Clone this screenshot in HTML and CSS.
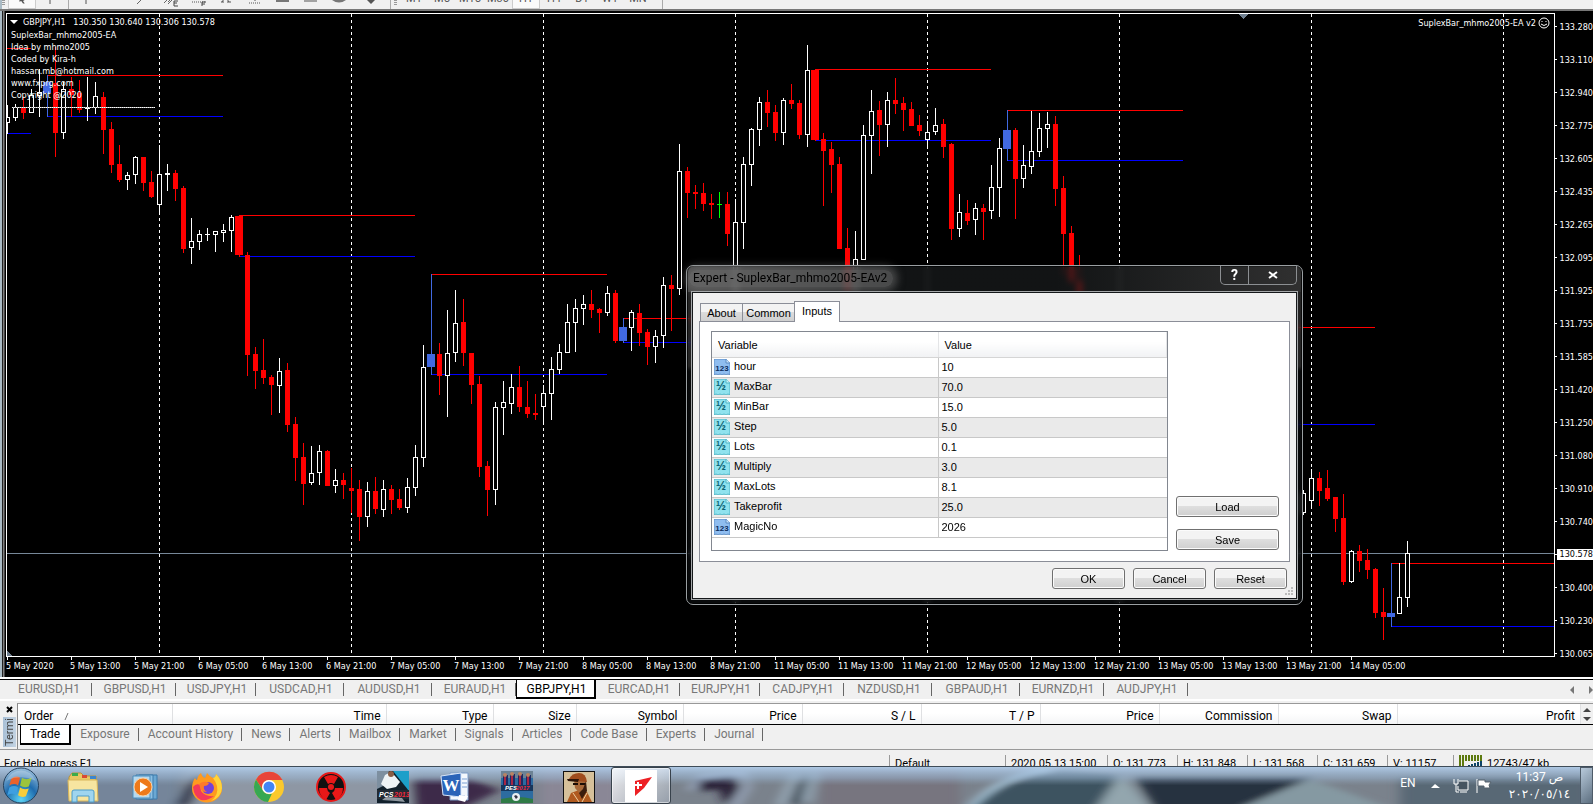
FILE: index.html
```html
<!DOCTYPE html>
<html lang="en">
<head>
  <meta charset="UTF-8" />
  <title>GBPJPY,H1</title>
  <meta name="viewport" content="width=device-width, initial-scale=1.0" />
  <link rel="stylesheet" href="styles.css">
</head>
<body>
  <svg class="defs" aria-hidden="true">
    <symbol id="icon-int" viewBox="0 0 16 16">
      <path d="M0 0h12l4 4v12l-2-1-2 1-2-1-2 1-2-1-2 1-2-1-2 1z" fill="#8fbdf0" stroke="#5d8cc4" />
      <path d="M12 0v4h4" fill="#c6e0fb" stroke="#5d8cc4" />
      <text x="8" y="12" text-anchor="middle" class="icon-text" fill="#0b2b5c">123</text>
    </symbol>
    <symbol id="icon-double" viewBox="0 0 16 16">
      <path d="M0 0h12l4 4v12l-2-1-2 1-2-1-2 1-2-1-2 1-2-1-2 1z" fill="#8fe2ee" stroke="#4fb4c6" />
      <path d="M12 0v4h4" fill="#c9f4fa" stroke="#4fb4c6" />
      <text x="7" y="11" text-anchor="middle" class="icon-half" fill="#0c6373">½</text>
    </symbol>
  </svg>

  <div class="app">
    <div class="toolbar">
      <span class="grip"></span>
      <button class="tool pressed" aria-label="Cursor"><svg viewBox="0 0 28 9"><path d="M10 0h6l-2 1 2 3h-2l-2-3-2 1z" fill="#555" /></svg></button>
      <button class="tool" aria-label="Crosshair"><svg viewBox="0 0 28 9"><path d="M14 0v4" stroke="#555" /></svg></button>
      <span class="separator"></span>
      <button class="tool" aria-label="Vertical line"><svg viewBox="0 0 28 9"><path d="M14 0v4" stroke="#555" /></svg></button>
      <button class="tool" aria-label="Horizontal line"></button>
      <button class="tool" aria-label="Trendline"><svg viewBox="0 0 28 9"><path d="M9 4l5-5" stroke="#666" /></svg></button>
      <button class="tool" aria-label="Channel"><svg viewBox="0 0 28 9"><path d="M8 3l3-3M12 4l4-4M14 0l-2 2" stroke="#666" /><path d="M22 1h-4v5h4M18 3h3" fill="none" stroke="#444" /></svg></button>
      <button class="tool" aria-label="Fibonacci"><svg viewBox="0 0 28 9"><path d="M8 2h13" stroke="#555" stroke-dasharray="1 1" /><path d="M18 6V2h4M18 4h3" fill="none" stroke="#444" /></svg></button>
      <button class="tool" aria-label="Text"><svg viewBox="0 0 28 9"><path d="M10 2l2-3M17 2l-2-3M9 2h3M15 2h4" stroke="#555" /></svg></button>
      <button class="tool" aria-label="Text label"><svg viewBox="0 0 28 9"><path d="M9 3h12M15 0v2" stroke="#555" stroke-dasharray="1 1" /></svg></button>
      <button class="tool" aria-label="Rectangle"><svg viewBox="0 0 28 9"><path d="M8 0h13v2H8z" fill="#777" /></svg></button>
      <button class="tool" aria-label="Line style"><svg viewBox="0 0 28 9"><path d="M8 1h13" stroke="#555" /></svg></button>
      <button class="tool" aria-label="Ellipse"><svg viewBox="0 0 28 9"><path d="M8 0h14q-7 5-14 0z" fill="#777" /></svg></button>
      <button class="tool" aria-label="Arrows"><svg viewBox="0 0 28 9"><path d="M15 0h8l-4 4z" fill="#555" /></svg></button>
      <span class="separator wide"></span>
      <span class="grip"></span>
      <button class="period">M1</button>
      <button class="period">M5</button>
      <button class="period">M15</button>
      <button class="period">M30</button>
      <button class="period pressed">H1</button>
      <button class="period">H4</button>
      <button class="period">D1</button>
      <button class="period">W1</button>
      <button class="period">MN</button>
      <span class="separator wide"></span>
    </div>

    <div class="chart-window">
      <div class="plot">
        <svg id="chart" shape-rendering="crispEdges"></svg>
        <div class="quote"><span class="arrow-down"></span>GBPJPY,H1&nbsp;&nbsp; 130.350 130.640 130.306 130.578</div>
        <div class="comment">
          SuplexBar_mhmo2005-EA<br>
          Idea by mhmo2005<br>
          Coded by Kira-h<br>
          hassan.mb@hotmail.com<br>
          www.fxprg.com<br>
          Copyright @2020
        </div>
        <div class="expert-name">SuplexBar_mhmo2005-EA v2
          <svg viewBox="0 0 12 12"><circle cx="6" cy="6" r="5" fill="none" stroke="#fff" /><path d="M4 4v1M8 4v1" stroke="#fff" /><path d="M3 7q3 3 6 0" fill="none" stroke="#fff" /></svg>
        </div>
      </div>
      <div class="price-axis">
        <span>133.280</span><span>133.110</span><span>132.940</span><span>132.775</span>
        <span>132.605</span><span>132.435</span><span>132.265</span><span>132.095</span>
        <span>131.925</span><span>131.755</span><span>131.585</span><span>131.420</span>
        <span>131.250</span><span>131.080</span><span>130.910</span><span>130.740</span>
        <span class="current"><b>130.578</b></span><span>130.400</span><span>130.230</span><span>130.065</span>
      </div>
      <div class="time-axis">
        <span>5 May 2020</span><span>5 May 13:00</span><span>5 May 21:00</span>
        <span>6 May 05:00</span><span>6 May 13:00</span><span>6 May 21:00</span>
        <span>7 May 05:00</span><span>7 May 13:00</span><span>7 May 21:00</span>
        <span>8 May 05:00</span><span>8 May 13:00</span><span>8 May 21:00</span>
        <span>11 May 05:00</span><span>11 May 13:00</span><span>11 May 21:00</span>
        <span>12 May 05:00</span><span>12 May 13:00</span><span>12 May 21:00</span>
        <span>13 May 05:00</span><span>13 May 13:00</span><span>13 May 21:00</span>
        <span>14 May 05:00</span>
      </div>
    </div>

    <nav class="chart-tabs">
      <button class="w88">EURUSD,H1</button>
      <button class="w84">GBPUSD,H1</button>
      <button class="w80">USDJPY,H1</button>
      <button class="w88">USDCAD,H1</button>
      <button class="w88">AUDUSD,H1</button>
      <button class="w84">EURAUD,H1</button>
      <button class="w80 active">GBPJPY,H1</button>
      <button class="w84">EURCAD,H1</button>
      <button class="w80">EURJPY,H1</button>
      <button class="w84">CADJPY,H1</button>
      <button class="w88">NZDUSD,H1</button>
      <button class="w88">GBPAUD,H1</button>
      <button class="w84">EURNZD,H1</button>
      <button class="w84">AUDJPY,H1</button>
      <div class="tab-scroll">
        <button aria-label="Scroll left"><svg viewBox="0 0 4 8"><path d="M4 0v8L0 4z" fill="#777" /></svg></button>
        <button aria-label="Scroll right"><svg viewBox="0 0 4 8"><path d="M0 0v8l4-4z" fill="#777" /></svg></button>
      </div>
    </nav>

    <div class="terminal">
      <div class="terminal-side">
        <button class="terminal-close" aria-label="Close"><svg viewBox="0 0 7 7"><path d="M1 1l5 5M6 1L1 6" stroke="#000" stroke-width="2" /></svg></button>
        <span class="terminal-name">Termi</span>
      </div>
      <div class="terminal-main">
        <div class="orders-row">
          <table class="orders">
            <tr>
              <th class="order">Order <svg viewBox="0 0 8 8"><path d="M1 8l3-7" stroke="#777" /></svg></th>
              <th class="time">Time</th>
              <th class="type">Type</th>
              <th class="size">Size</th>
              <th class="type">Symbol</th>
              <th class="money">Price</th>
              <th class="money">S / L</th>
              <th class="money">T / P</th>
              <th class="money">Price</th>
              <th class="money">Commission</th>
              <th class="money">Swap</th>
              <th>Profit</th>
            </tr>
          </table>
          <div class="spin"><svg viewBox="0 0 8 16"><path d="M0 6l4-4 4 4zM0 11h8l-4 4z" fill="#444" /></svg></div>
        </div>
        <nav class="terminal-tabs">
          <button class="active">Trade</button>
          <button>Exposure</button>
          <button>Account History</button>
          <button>News</button>
          <button>Alerts</button>
          <button>Mailbox</button>
          <button>Market</button>
          <button>Signals</button>
          <button>Articles</button>
          <button>Code Base</button>
          <button>Experts</button>
          <button>Journal</button>
        </nav>
      </div>
    </div>

    <div class="statusbar">
      <span class="help">For Help, press F1</span>
      <span class="profile">Default</span>
      <span class="date">2020.05.13 15:00</span>
      <span class="ohlc">O: 131.773</span>
      <span class="ohlc">H: 131.848</span>
      <span class="ohlc">L: 131.568</span>
      <span class="ohlc">C: 131.659</span>
      <span class="volume">V: 11157</span>
      <span class="traffic">
        <svg viewBox="0 0 24 12"><path d="M0 3h24" stroke="#5d7a10" stroke-width="6" stroke-dasharray="2 1" /><path d="M1 6v6M4 6v6" stroke="#5d7a10" stroke-width="2" /><path d="M7 11v1M10 10v2M13 9v3M16 8v4M19 7v5M22 6v6" stroke="#0d4468" stroke-width="2" /></svg>
        12743/47 kb
      </span>
    </div>

    <div class="taskbar">
      <svg class="wallpaper" viewBox="0 0 1593 38" preserveAspectRatio="none" aria-hidden="true">
        <defs>
          <filter id="soft"><feGaussianBlur stdDeviation="6 3" /></filter>
          <linearGradient id="glass" x1="0" y1="0" x2="0" y2="1">
            <stop offset="0" stop-color="#b4d0ee" stop-opacity="0.9" />
            <stop offset="0.3" stop-color="#9db9d6" stop-opacity="0.5" />
            <stop offset="0.5" stop-color="#8fa5ba" stop-opacity="0" />
          </linearGradient>
        </defs>
        <rect width="1593" height="38" fill="#7a828c" />
        <g filter="url(#soft)">
          <rect x="-10" y="0" width="190" height="50" fill="#74859a" />
          <rect x="185" y="-5" width="225" height="50" fill="#8e97a4" />
          <path d="M175 40l20-32 10 0-15 32z" fill="#2f3346" />
          <path d="M410 12h60l30 12-40 20h-45z" fill="#3e2c48" />
          <rect x="540" y="0" width="80" height="50" fill="#8a8796" />
          <path d="M690 24l10-14 44-4 4 14-14 22" fill="none" stroke="#a3b2cc" stroke-width="5" />
          <path d="M698 12l36-4 4 14-12 18-8-18-18 4z" fill="#2c2438" />
          <path d="M780 40l16-34M806 36l8-30" stroke="#a3b8c8" stroke-width="6" />
          <path d="M790 38l8-20 8-10 4 0-10 30z" fill="#36424e" />
          <rect x="820" y="0" width="140" height="50" fill="#77757f" />
          <path d="M970 44q30-30 90-42l60 6 0 40z" fill="#3d5360" />
          <path d="M970 42q30-34 80-40" fill="none" stroke="#a9cbe0" stroke-width="5" />
          <path d="M1095 44l26-38 30 38z" fill="#93a6ae" />
          <path d="M1135 10h180l-80 34h-80z" fill="#26323f" />
          <path d="M1310 12l-70 30h150z" fill="#8599a2" />
          <rect x="1400" y="10" width="190" height="40" fill="#586875" />
        </g>
        <rect width="1593" height="38" fill="url(#glass)" />
      </svg>

      <button class="start" aria-label="Start">
        <svg viewBox="0 0 38 38">
          <defs>
            <radialGradient id="orb" cx="0.5" cy="0.9" r="0.9">
              <stop offset="0" stop-color="#5cd3f5" />
              <stop offset="0.5" stop-color="#1f6cae" />
              <stop offset="1" stop-color="#9cc0dc" />
            </radialGradient>
          </defs>
          <circle cx="19" cy="19" r="18" fill="url(#orb)" stroke="#23405c" />
          <path d="M9 12q5-4 9-1l-2 8q-4-3-9 0z" fill="#e9622c" />
          <path d="M20 11q4 3 10 0l-3 9q-5 2-9-1z" fill="#9cc43c" />
          <path d="M7 21q5-3 9 0l-2 8q-4-3-9 0z" fill="#3f9fe0" />
          <path d="M18 21q4 3 9 1l-3 8q-4 2-8-1z" fill="#f8cd3a" />
          <path d="M4 14a16 16 0 0 1 30 0q-15-7-30 0z" fill="#fff" opacity="0.25" />
        </svg>
      </button>
      <button class="app-button" aria-label="Explorer">
        <svg viewBox="0 0 32 32">
          <path d="M2 6l3-4h9l3 3h12v20H2z" fill="#e8c763" stroke="#b8923b" />
          <path d="M5 2h6v3H5z" fill="#3cab4a" /><path d="M15 4h5v3h-5z" fill="#d94a33" /><path d="M23 5h6v3h-6z" fill="#3a85d0" />
          <path d="M1 9h29l1 21H2z" fill="#f7e5a0" stroke="#d9b65b" />
          <path d="M5 31V21q0-2 2-2h18q2 0 2 2v10h-5v-6H10v6z" fill="#9fd5ef" stroke="#4c9cc9" />
        </svg>
      </button>
      <button class="app-button" aria-label="Media Player">
        <svg viewBox="0 0 32 32">
          <path d="M10 4h18v24H10z" fill="#6ba8d3" stroke="#3c7bab" />
          <path d="M7 4h17v24H7z" fill="#8cc0e4" stroke="#3c7bab" />
          <path d="M4 5h17v22H4z" fill="#b5d9f0" stroke="#4d8dbb" />
          <circle cx="14" cy="16" r="9" fill="#ee7a1b" stroke="#fbd2a4" />
          <path d="M11 11l8 5-8 5z" fill="#fff" />
        </svg>
      </button>
      <button class="app-button" aria-label="Firefox">
        <svg viewBox="0 0 32 32">
          <path d="M16 2q2 3 6 5 3-1 3-4 6 6 6 14a15 14 0 0 1-30 1Q1 11 4 7q1 2 2 2 1-5 4-7 1 4 4 5 1-2 2-5z" fill="#ff9a1f" />
          <path d="M25 3q6 6 6 14a15 14 0 0 1-11 13q8-6 6-15-1-4-4-8 3-1 3-4z" fill="#ffd43a" />
          <path d="M2 16q3-4 7-2l1 6q4 6 13 5-6 5-13 4-7-3-8-13z" fill="#f4395a" />
          <circle cx="17" cy="17" r="6" fill="#7542d8" />
          <path d="M8 13q5-4 10-1-1 3-5 3-1 4 3 6-6 1-8-8z" fill="#ff7a2a" />
        </svg>
      </button>
      <button class="app-button" aria-label="Chrome">
        <svg viewBox="0 0 32 32">
          <circle cx="16" cy="16" r="15" fill="#fbc92d" />
          <path d="M3 8.500A15 15 0 0 1 29.500 9H16a7 7 0 0 0-6 10.500z" fill="#e8453a" />
          <path d="M3 8.500l7 11A7 7 0 0 0 19 22.500L15 31A15 15 0 0 1 3 8.500z" fill="#36a852" />
          <circle cx="16" cy="16" r="7" fill="#fff" /><circle cx="16" cy="16" r="5.500" fill="#4285f4" />
        </svg>
      </button>
      <button class="app-button" aria-label="Radiation">
        <svg viewBox="0 0 32 32">
          <circle cx="16" cy="16" r="14" fill="#111" stroke="#e81818" stroke-width="2" />
          <path d="M13 13L9 6q7-4 14 0l-4 7q-3-2-6 0z" fill="#e81818" />
          <path d="M12 17H4q0 8 7 12l4-7q-3-2-3-5z" fill="#e81818" />
          <path d="M20 17h8q0 8-7 12l-4-7q3-2 3-5z" fill="#e81818" />
          <circle cx="16" cy="16" r="3" fill="#e81818" />
        </svg>
      </button>
      <button class="app-button" aria-label="PES 2013">
        <svg viewBox="0 0 32 32">
          <path d="M0 0h32v32H0z" fill="#11202c" />
          <path d="M16 0h16v20z" fill="#1d9fc9" /><path d="M0 0h12l-4 14-8 4z" fill="#7d8fa0" />
          <path d="M8 4l6-3 4 4 5 6-4 5-9 2-6-5z" fill="#eef3f6" />
          <circle cx="14" cy="3" r="3" fill="#8a5d45" />
          <path d="M0 19h32v9H0z" fill="#222a33" />
          <path d="M5 29l4-3 16 1 3 4-9-1z" fill="#e3e8ec" opacity="0.6" />
          <text x="2" y="26" class="game-text" fill="#fff">PCS</text><text x="17" y="26" class="game-text" fill="#f0283c">2013</text>
        </svg>
      </button>
      <button class="app-button" aria-label="Word">
        <svg viewBox="0 0 32 32">
          <path d="M11 2h18v27H11z" fill="#f4f8fd" stroke="#7d9cc8" />
          <path d="M23 8h5M23 12h5M23 16h5M14 25h12" stroke="#7aa0d4" />
          <path d="M2 5l20-3v24L4 24z" fill="#2a63b8" stroke="#d7e5f8" />
          <text x="12" y="20" text-anchor="middle" class="word-text" fill="#fff">W</text>
          <path d="M20 24l9 1-3 6-7-2z" fill="#fff" />
        </svg>
      </button>
      <button class="app-button" aria-label="PES 2017">
        <svg viewBox="0 0 32 32">
          <path d="M0 0h32v32H0z" fill="#2d6ca0" />
          <path d="M0 0h32v7H0z" fill="#6c8294" />
          <path d="M2 4h5v12H2zM9 3h5v13H9zM17 3h5v13h-5zM25 4h5v12h-5z" fill="#1f2a63" />
          <path d="M4 6v9M11 5v10M19 5v10M27 6v9" stroke="#a72743" stroke-width="2" />
          <circle cx="4" cy="4" r="2" fill="#b98262" /><circle cx="11" cy="3" r="2" fill="#b98262" /><circle cx="19" cy="3" r="2" fill="#b98262" /><circle cx="27" cy="4" r="2" fill="#b98262" />
          <path d="M0 14h32v6H0z" fill="#16365c" />
          <text x="4" y="19" class="game-text small" fill="#fff">PES</text><text x="15" y="19" class="game-text small" fill="#f0283c">2017</text>
          <path d="M0 28q16-4 32 0v4H0z" fill="#2f7b46" />
          <circle cx="15" cy="26" r="4" fill="#e8eef2" /><path d="M13 25l2-1 2 2-2 2z" fill="#334" />
        </svg>
      </button>
      <button class="app-button" aria-label="San Andreas">
        <svg viewBox="0 0 32 32">
          <path d="M0 0h32v32H0z" fill="#111" /><path d="M1 1h30v30H1z" fill="#d6c09a" />
          <path d="M4 31l4-9 8-3 8 2 5 10z" fill="#b05a20" />
          <path d="M11 9h12l-1 9-5 5-5-6z" fill="#a8693a" />
          <path d="M6 8q3-6 10-6 7 0 8 9l-9-1z" fill="#a04c1e" /><path d="M4 8l12 0-1 3-10-1z" fill="#2c1409" />
          <path d="M10 12h5v2h-5zM17 12h6v2h-6z" fill="#1b0d06" />
          <path d="M16 22l4-4 3-8 1 10-5 8z" fill="#3b1c0d" /><path d="M10 22l6 9M24 22l-5 9" stroke="#f0cfa0" />
        </svg>
      </button>
      <button class="app-button running" aria-label="MetaTrader">
        <svg viewBox="0 0 32 32">
          <path d="M0 0h32v32H0z" fill="#fff" />
          <path d="M10 11l17-4-8 11-9 8z" fill="#ed2024" />
          <path d="M13 12v7M10 15h7" stroke="#fff" stroke-width="2" />
        </svg>
      </button>

      <div class="tray">
        <button class="lang">EN</button>
        <button aria-label="Show hidden icons"><svg class="tray-arrow" viewBox="0 0 9 6"><path d="M0 5l4-4 5 4z" fill="#fff" /></svg></button>
        <button aria-label="Network"><svg class="tray-icon" viewBox="0 0 16 16"><path d="M6 3h9v9H5V8" fill="#465460" stroke="#fff" /><path d="M1 1v5h4V1M3 6v8h3M7 14h7" fill="none" stroke="#fff" /></svg></button>
        <button aria-label="Action center"><svg class="tray-icon" viewBox="0 0 16 16"><path d="M1 1v14" stroke="#fff" /><path d="M2 2h7v2h6l-2 3 1 3H8V8H2z" fill="#fff" stroke="#54616c" /></svg></button>
        <div class="clock"><span>11:37 ص</span><span>٢٠٢٠/٠٥/١٤</span></div>
        <button class="show-desktop" aria-label="Show desktop"></button>
      </div>
    </div>
  </div>

  <section class="dialog" role="dialog" aria-labelledby="dialog-title">
    <header class="titlebar">
      <span id="dialog-title" class="dialog-title">Expert - SuplexBar_mhmo2005-EAv2</span>
      <div class="window-buttons">
        <button class="help-button">?</button>
        <button class="close-button" aria-label="Close"><svg viewBox="0 0 10 8"><path d="M1 1l8 6M9 1L1 7" stroke="#fff" stroke-width="2" /></svg></button>
      </div>
    </header>
    <div class="dialog-body">
      <div class="dialog-tabs">
        <button>About</button>
        <button class="wide">Common</button>
        <button class="active">Inputs</button>
      </div>
      <div class="panel">
        <div class="inputs-box">
          <table class="inputs">
            <thead>
              <tr><th class="name">Variable</th><th>Value</th></tr>
            </thead>
            <tbody>
              <tr><td><svg><use href="#icon-int" /></svg>hour</td><td>10</td></tr>
              <tr><td><svg><use href="#icon-double" /></svg>MaxBar</td><td>70.0</td></tr>
              <tr><td><svg><use href="#icon-double" /></svg>MinBar</td><td>15.0</td></tr>
              <tr><td><svg><use href="#icon-double" /></svg>Step</td><td>5.0</td></tr>
              <tr><td><svg><use href="#icon-double" /></svg>Lots</td><td>0.1</td></tr>
              <tr><td><svg><use href="#icon-double" /></svg>Multiply</td><td>3.0</td></tr>
              <tr><td><svg><use href="#icon-double" /></svg>MaxLots</td><td>8.1</td></tr>
              <tr><td><svg><use href="#icon-double" /></svg>Takeprofit</td><td>25.0</td></tr>
              <tr><td><svg><use href="#icon-int" /></svg>MagicNo</td><td>2026</td></tr>
            </tbody>
          </table>
        </div>
        <div class="side-buttons">
          <button class="push">Load</button>
          <button class="push">Save</button>
        </div>
      </div>
      <div class="dialog-footer">
        <button class="push">OK</button>
        <button class="push">Cancel</button>
        <button class="push">Reset</button>
      </div>
      <svg class="resize-grip" viewBox="0 0 8 8"><path d="M6 0h2v2H6zM3 3h2v2H3zM6 3h2v2H6zM0 6h2v2H0zM3 6h2v2H3zM6 6h2v2H6z" fill="#bbb" /></svg>
    </div>
  </section>

  <script>
    const STEP = 8;
    const TOP = 14;
    const chart = document.getElementById("chart");

    // [bar, high, body top, body bottom, low, kind]
    // kinds: w = up, r = down, g = flat, b / R = marked bars
    const bars = [
      [0,105,117,123,134,"w"],[1,104,107,118,121,"w"],[2,97,107,113,119,"r"],[3,89,95,113,113,"w"],
      [4,69,92,96,117,"w"],[5,75,82,93,117,"b"],[6,47,83,133,157,"r"],[7,82,89,133,139,"w"],
      [8,77,89,95,117,"r"],[9,80,93,110,113,"r"],[10,77,107,109,121,"w"],[11,82,96,108,114,"w"],
      [12,92,97,130,154,"r"],[13,122,129,165,173,"r"],[14,145,164,180,182,"r"],[15,172,175,180,190,"w"],
      [16,156,157,175,184,"w"],[17,157,157,183,191,"r"],[18,171,182,197,198,"r"],[19,145,174,205,214,"w"],
      [20,164,173,175,191,"w"],[21,170,173,189,201,"r"],[22,186,188,249,253,"r"],[23,218,241,248,264,"w"],
      [24,230,234,242,250,"w"],[25,228,234,235,241,"w"],[26,231,231,235,252,"w"],[27,224,230,233,242,"w"],
      [28,215,217,231,252,"w"],[29,215,216,255,257,"R"],[30,252,255,355,376,"r"],[31,347,354,371,389,"r"],
      [32,339,370,378,384,"r"],[33,375,377,385,415,"r"],[34,358,371,386,413,"w"],[35,363,370,425,432,"r"],
      [36,417,424,458,481,"r"],[37,443,457,484,505,"r"],[38,446,473,483,485,"w"],[39,445,451,473,485,"w"],
      [40,450,451,486,486,"r"],[41,469,480,486,493,"w"],[42,473,480,485,499,"r"],[43,468,488,491,513,"r"],
      [44,480,489,517,541,"r"],[45,482,491,517,527,"w"],[46,477,491,509,514,"r"],[47,480,489,510,517,"w"],
      [48,485,489,500,514,"r"],[49,489,499,508,510,"r"],[50,478,487,508,513,"w"],[51,445,457,488,496,"w"],
      [52,345,367,458,467,"w"],[53,274,354,367,375,"b"],[54,343,354,376,395,"r"],[55,310,353,376,417,"w"],
      [56,290,323,353,362,"w"],[57,299,322,353,366,"r"],[58,353,353,385,404,"r"],[59,376,384,467,477,"r"],
      [60,461,466,490,516,"r"],[61,402,407,490,505,"w"],[62,381,402,408,435,"w"],[63,374,387,404,414,"w"],
      [64,366,387,407,412,"r"],[65,381,407,414,418,"r"],[66,394,413,415,420,"r"],[67,385,393,407,423,"w"],
      [68,357,369,394,420,"w"],[69,344,352,370,374,"w"],[70,304,322,353,353,"w"],[71,299,308,323,352,"w"],
      [72,295,304,309,325,"w"],[73,290,304,310,318,"r"],[74,308,309,313,333,"r"],[75,286,293,313,316,"w"],
      [76,290,293,341,343,"r"],[77,318,327,341,343,"b"],[78,310,312,328,351,"w"],[79,304,313,333,346,"r"],
      [80,329,332,347,365,"r"],[81,330,336,347,363,"w"],[82,277,285,336,348,"w"],[83,275,285,289,331,"r"],
      [84,144,171,289,295,"w"],[85,167,171,193,218,"r"],[86,185,192,194,209,"r"],[87,183,193,204,211,"r"],
      [88,194,203,205,219,"r"],[89,192,204,205,218,"g"],[90,192,204,234,246,"r"],[91,199,222,290,300,"w"],
      [92,157,164,223,249,"w"],[93,128,129,165,186,"w"],[94,97,102,130,146,"w"],[95,90,102,113,127,"r"],
      [96,105,112,133,141,"r"],[97,98,100,133,145,"w"],[98,84,100,104,109,"r"],[99,100,103,135,139,"r"],
      [100,45,70,135,147,"w"],[101,70,70,140,141,"R"],[102,133,139,151,206,"r"],[103,142,149,165,193,"r"],
      [104,157,164,249,249,"r"],[105,228,248,290,298,"r"],[106,231,259,290,298,"w"],[107,125,135,260,260,"w"],
      [108,90,111,136,174,"w"],[109,101,110,125,156,"r"],[110,92,100,125,147,"w"],[111,78,100,104,114,"r"],
      [112,97,103,110,131,"r"],[113,102,109,126,126,"r"],[114,115,125,131,136,"r"],[115,121,132,140,148,"w"],
      [116,108,125,132,135,"w"],[117,119,124,147,158,"r"],[118,143,144,229,240,"r"],[119,194,212,229,237,"w"],
      [120,200,213,221,225,"r"],[121,203,208,220,235,"w"],[122,204,208,212,240,"r"],[123,165,187,211,219,"w"],
      [124,138,148,188,217,"w"],[125,110,130,149,161,"b"],[126,128,130,179,219,"r"],[127,145,165,179,188,"w"],
      [128,111,151,167,174,"w"],[129,113,128,152,157,"w"],[130,112,124,129,148,"w"],[131,116,124,189,206,"r"],
      [132,176,188,234,275,"r"],[133,226,233,281,284,"r"],[134,255,281,300,304,"r"],
      [162,490,493,513,515,"w"],[163,469,478,501,507,"w"],[164,472,478,491,506,"r"],[165,470,488,499,501,"r"],
      [166,497,497,519,532,"r"],[167,494,518,582,585,"r"],[168,550,551,582,583,"w"],[169,545,551,561,572,"r"],
      [170,549,560,570,579,"r"],[171,568,569,613,618,"r"],[172,588,612,617,640,"r"],[173,563,613,617,627,"b"],
      [174,563,597,614,614,"w"],[175,541,553,598,607,"w"]
    ];

    // [first bar, last bar, upper line, lower line]
    const levels = [
      [0,3,48,133],[5,27,75,116],[29,51,215,256],[53,75,274,374],[77,99,318,342],
      [101,123,69,140],[125,147,110,160],[149,171,327,424],[173,400,563,626]
    ];

    const colors = { w: "#ffffff", r: "#ff0000", g: "#00ff00", b: "#4169e1", R: "#ff0000" };

    function rect(x, y, width, height, fill) {
      const el = document.createElementNS("http://www.w3.org/2000/svg", "rect");
      const attrs = { x, y: y - TOP, width, height, fill };
      for (const name in attrs) el.setAttribute(name, attrs[name]);
      chart.appendChild(el);
    }

    function drawGrid() {
      for (let bar = 19; bar < 400; bar += 24) {
        for (let y = 14; y < 656; y += 6) {
          rect(bar * STEP, y, 1, 3, "#ffffff");
        }
      }
      rect(0, 553, 4000, 1, "#778899");
    }

    function drawLevels() {
      levels.forEach(([from, to, upper, lower]) => {
        rect(from * STEP, upper, (to - from) * STEP, 1, "#ff0000");
        rect(from * STEP, lower, (to - from) * STEP, 1, "#0000ff");
      });
    }

    function drawBars() {
      bars.forEach(([bar, high, top, bottom, low, kind]) => {
        const x = bar * STEP;
        const height = Math.max(bottom - top, 1);
        rect(x, high, 1, low - high, colors[kind]);
        if (kind === "b" || kind === "R") {
          rect(x - 4, top, 8, height, colors[kind]);
        } else {
          rect(x - 2, top, 5, height, colors[kind]);
          if (kind === "w" && height > 2) rect(x - 1, top + 1, 3, height - 2, "#000000");
        }
      });
    }

    function drawMarkers() {
      // comment underline, shift marker and scroll corner
      rect(5, 107, 143, 1, "#aaaaaa");
      for (let x = 5; x < 148; x += 2) rect(x, 107, 1, 1, "#ffffff");
      for (let i = 0; i < 5; i++) rect(1232 + i, 14 + i, 9 - i * 2, 1, "#708090");
      for (let i = 0; i < 5; i++) rect(0, 651 + i, i + 1, 1, "#708090");
    }

    drawGrid();
    drawLevels();
    drawBars();
    drawMarkers();
  </script>
</body>
</html>
```
FILE: styles.css
```css
* {
  box-sizing: border-box;
}

body {
  margin: 0;
  background: #000;
  overflow: hidden;
  font-family: Roboto, "Noto Sans", sans-serif;
  font-size: 12px;
}

button {
  font: inherit;
  color: inherit;
  background: none;
  border: 0;
  padding: 0;
  margin: 0;
}

.defs {
  position: absolute;
  width: 0;
  height: 0;
}

.icon-text {
  font: bold 8px "Liberation Sans", sans-serif;
}

.icon-half {
  font: bold 12px "Liberation Sans", sans-serif;
}

.game-text {
  font: italic bold 7px "Liberation Sans", sans-serif;
}

.game-text.small {
  font-size: 6px;
}

.word-text {
  font: bold 17px "Liberation Serif", serif;
}

.app {
  display: flex;
  flex-direction: column;
  height: 100vh;
}

/* toolbar */

.toolbar {
  display: flex;
  align-items: flex-end;
  height: 9px;
  overflow: hidden;
  background: #f0f0f0;
  border-left: 2px solid #a9bac4;
  flex: none;
}

.grip {
  width: 6px;
  height: 6px;
  align-self: flex-start;
  border-right: 3px solid transparent;
  background: repeating-linear-gradient(#999 0 1px, #f0f0f0 1px 2px) content-box;
}

.tool {
  width: 28px;
  height: 9px;
  flex: none;
}

.tool svg {
  display: block;
  width: 28px;
  height: 9px;
}

.tool.pressed {
  border: 1px solid #ccc;
  border-top: 0;
  background: #fafafa;
}

.tool.pressed svg {
  height: 8px;
}

.separator {
  width: 8px;
  height: 9px;
  border-left: 1px solid #aaa;
  margin: 0 0 0 4px;
  flex: none;
}

.separator + .tool {
  margin-left: -4px;
}

.separator.wide {
  width: 4px;
  margin-left: 10px;
}

.period {
  width: 28px;
  height: 26px;
  padding-top: 6px;
  font-size: 11px;
  line-height: 12px;
  color: #555;
  flex: none;
}

.period.pressed {
  background: #fafafa;
  border: 1px solid #ccc;
}

/* chart */

.chart-window {
  flex: 1;
  min-height: 0;
  display: grid;
  grid-template-columns: 1fr 38px;
  grid-template-rows: 1fr 20px;
  padding: 2px 0 0 6px;
  border-top: 2px solid #777;
  border-bottom: 2px solid #fff;
  background: linear-gradient(to right, #a9bac4 0 2px, #222 2px 3px, #808080 3px 4px, #444 4px 5px, #000 5px);
  color: #fff;
  font-family: "DejaVu Sans Condensed", "DejaVu Sans", sans-serif;
  font-size: 9px;
  overflow: hidden;
}

.plot {
  position: relative;
  border: 1px solid #fff;
  overflow: hidden;
}

.plot > svg {
  display: block;
  width: 100%;
  height: 100%;
}

.quote {
  position: absolute;
  left: 3px;
  top: 2px;
  line-height: 12px;
}

.arrow-down {
  display: inline-block;
  border: 4px solid transparent;
  border-top: 4px solid #fff;
  border-bottom: 0;
  margin: 0 5px 1px 0;
}

.comment {
  position: absolute;
  left: 4px;
  top: 15px;
  line-height: 12px;
}

.expert-name {
  position: absolute;
  right: 4px;
  top: 3px;
  display: flex;
  gap: 2px;
  line-height: 12px;
}

.expert-name svg {
  width: 12px;
  height: 12px;
}

.price-axis {
  grid-row: 1 / 3;
  grid-column: 2;
  margin-top: -3px;
  min-height: 0;
}

.price-axis span {
  display: flex;
  align-items: center;
  gap: 3px;
  height: 33px;
}

.price-axis span::before {
  content: "";
  width: 2px;
  height: 1px;
  background: #fff;
}

.price-axis b {
  font-weight: normal;
}

.price-axis .current {
  gap: 0;
}

.current b {
  flex: 1;
  padding-left: 3px;
  line-height: 11px;
  background: #fff;
  color: #000;
}

.time-axis {
  display: flex;
  white-space: nowrap;
  overflow: hidden;
}

.time-axis span {
  position: relative;
  flex: 0 0 64px;
  padding-top: 3px;
  line-height: 12px;
}

.time-axis span::before {
  content: "";
  position: absolute;
  left: 1px;
  top: 0;
  width: 1px;
  height: 3px;
  background: #fff;
}

/* chart tabs */

.chart-tabs {
  display: flex;
  height: 24px;
  padding: 0 0 4px 4px;
  border-top: 1px solid #000;
  background: linear-gradient(#f0f0f0 19px, #fff 19px 21px, #f0f0f0 21px);
  color: #777;
  flex: none;
}

.chart-tabs > button {
  position: relative;
  height: 19px;
  padding: 0 0 2px 2px;
  line-height: 16px;
}

.chart-tabs > button::after,
.terminal-tabs button::after {
  content: "";
  position: absolute;
  right: 0;
  top: 3px;
  width: 1px;
  height: 13px;
  background: #666;
}

.w80 {
  width: 80px;
}

.w84 {
  width: 84px;
}

.w88 {
  width: 88px;
}

.chart-tabs .active {
  padding-bottom: 0;
  background: #fff;
  color: #000;
  border: 1px solid #000;
  border-width: 0 2px 2px 1px;
}

.chart-tabs .active::after,
.terminal-tabs .active::after {
  display: none;
}

.tab-scroll {
  margin-left: auto;
  display: flex;
  align-items: center;
  gap: 15px;
}

.tab-scroll svg {
  display: block;
  width: 4px;
  height: 8px;
}

/* terminal */

.terminal {
  display: flex;
  height: 46px;
  background: #f0f0f0;
  flex: none;
}

.terminal-side {
  width: 17px;
  padding: 2px 0 0 3px;
  flex: none;
}

.terminal-close {
  display: block;
  width: 12px;
  height: 8px;
}

.terminal-close svg {
  display: block;
  width: 7px;
  height: 7px;
  margin-left: 3px;
}

.terminal-name {
  display: block;
  width: 13px;
  height: 30px;
  margin-top: 4px;
  writing-mode: vertical-rl;
  transform: rotate(180deg);
  font-size: 11px;
  line-height: 13px;
  text-align: center;
  color: #444;
  background: linear-gradient(to right, #c3d3e2, #a9c0d6);
}

.terminal-main {
  flex: 1;
  min-width: 0;
  border-left: 1px solid #888;
  border-top: 1px solid #999;
}

.orders-row {
  display: flex;
  height: 21px;
  border-bottom: 1px solid #000;
  background: linear-gradient(#fff 9px, #f4f5f6);
}

.orders {
  flex: 1;
  table-layout: fixed;
  border-collapse: collapse;
}

.orders th {
  padding: 3px 5px 0 0;
  border-right: 1px solid #dfe0e2;
  font-weight: normal;
  line-height: 16px;
  text-align: right;
  white-space: nowrap;
}

.orders .order {
  width: 154px;
  padding-left: 6px;
  text-align: left;
}

.order svg {
  width: 8px;
  height: 8px;
  margin-left: 8px;
}

.orders .time {
  width: 214px;
}

.orders .type {
  width: 107px;
}

.orders .size {
  width: 83px;
}

.orders .money {
  width: 119px;
}

.spin {
  width: 12px;
  padding: 2px;
  background: #f0f0f0;
}

.spin svg {
  display: block;
  width: 8px;
  height: 16px;
}

.terminal-tabs {
  display: flex;
  padding-left: 2px;
  color: #777;
}

.terminal-tabs button {
  position: relative;
  height: 20px;
  padding: 0 9px 2px;
  line-height: 17px;
  white-space: nowrap;
}

.terminal-tabs .active {
  background: #fff;
  color: #000;
  border: 1px solid #000;
  border-width: 0 2px 2px 1px;
  padding: 0 9px;
}

/* status bar */

.statusbar {
  display: flex;
  height: 17px;
  padding: 5px 0 0 2px;
  border-top: 1px solid #999;
  background: #f0f0f0;
  font-size: 11px;
  line-height: 18px;
  white-space: nowrap;
  overflow: hidden;
  flex: none;
}

.statusbar span {
  flex: none;
  height: 18px;
  padding-left: 5px;
  border-left: 1px solid #999;
}

.statusbar .help {
  flex: 1;
  padding-left: 2px;
  border: 0;
}

.statusbar .profile {
  width: 116px;
}

.statusbar .date {
  width: 102px;
}

.statusbar .ohlc {
  width: 70px;
}

.statusbar .volume {
  width: 66px;
}

.statusbar .traffic {
  width: 140px;
  display: flex;
  gap: 4px;
}

.traffic svg {
  width: 24px;
  height: 12px;
}

/* taskbar */

.taskbar {
  position: relative;
  display: flex;
  height: 38px;
  border-top: 1px solid #3f4c58;
  overflow: hidden;
  flex: none;
}

.wallpaper {
  position: absolute;
  inset: 0;
  width: 100%;
  height: 100%;
}

.start,
.app-button,
.tray {
  position: relative;
}

.start {
  width: 52px;
  padding-left: 2px;
}

.start svg {
  display: block;
  width: 38px;
  height: 37px;
}

.app-button {
  width: 62px;
  height: 37px;
  padding-top: 2px;
}

.app-button svg {
  display: block;
  width: 32px;
  height: 32px;
  margin: 0 auto;
}

.app-button.running {
  width: 60px;
  margin-left: 1px;
  border: 1px solid #38424c;
  border-radius: 3px;
  background: linear-gradient(135deg, rgba(255, 255, 255, 0.85), rgba(200, 210, 225, 0.35));
  box-shadow: inset 0 0 0 1px rgba(255, 255, 255, 0.5);
  padding-top: 1px;
}

.tray {
  display: flex;
  align-items: center;
  margin-left: auto;
  color: #fff;
}

.lang {
  width: 16px;
  margin-right: 15px;
  padding-bottom: 6px;
}

.tray svg {
  display: block;
}

.tray-arrow {
  width: 9px;
  height: 6px;
  margin-right: 13px;
}

.tray-icon {
  width: 16px;
  height: 16px;
  margin-right: 7px;
}

.clock {
  display: flex;
  flex-direction: column;
  width: 81px;
  text-align: center;
  line-height: 17px;
  font-family: Roboto, "DejaVu Sans", sans-serif;
}

.show-desktop {
  width: 13px;
  height: 37px;
  border: 1px solid #4e5b68;
  background: linear-gradient(135deg, #b8cadb, #5d6f80);
}

/* expert dialog */

.dialog {
  position: absolute;
  left: 686px;
  top: 265px;
  width: 617px;
  padding: 0 5px 5px;
  border: 1px solid #9a9fa2;
  border-radius: 7px;
  background: linear-gradient(rgba(90, 90, 90, 0.4) 100px, rgba(20, 24, 27, 0.4) 105px);
  backdrop-filter: blur(3px);
  box-shadow: inset 0 0 0 1px rgba(0, 0, 0, 0.7);
}

.titlebar {
  display: flex;
  justify-content: space-between;
  height: 26px;
  margin: 0 -4px;
  padding: 0 4px;
  border-radius: 6px 6px 0 0;
  background: linear-gradient(to right, rgba(110, 110, 110, 0.5), rgba(0, 4, 6, 0.5) 35%, rgba(0, 4, 6, 0.5) 60%, rgba(60, 60, 60, 0.5));
}

.dialog-title {
  padding: 0 6px 0 4px;
  margin: 4px 0 0 -3px;
  height: 17px;
  line-height: 17px;
  border-radius: 8px;
  background: rgba(125, 125, 125, 0.5);
  box-shadow: 0 0 8px 4px rgba(125, 125, 125, 0.5);
  color: #000;
}

.window-buttons {
  display: flex;
  height: 19px;
  border: 1px solid #8c8f92;
  border-top: 0;
  border-radius: 0 0 5px 5px;
  color: #fff;
}

.help-button {
  width: 28px;
  font-weight: bold;
  font-size: 14px;
  border-right: 1px solid #8c8f92;
}

.close-button {
  width: 47px;
}

.close-button svg {
  width: 10px;
  height: 8px;
}

.dialog-body {
  position: relative;
  padding: 8px 6px 9px;
  border: 1px solid #15181a;
  outline: 1px solid #a5a8aa;
  background: #f0f0f0;
  font-family: "Liberation Sans", Arial, sans-serif;
  font-size: 11px;
}

.dialog-tabs {
  display: flex;
  align-items: flex-end;
  padding-left: 1px;
}

.dialog-tabs button {
  width: 43px;
  height: 18px;
  border: 1px solid #8b8e98;
  border-bottom: 0;
  background: linear-gradient(#f3f3f3 50%, #dcdcdc 50%, #d0d0d0);
}

.dialog-tabs .wide {
  width: 52px;
  border-left: 0;
}

.dialog-tabs .active {
  position: relative;
  width: 46px;
  height: 21px;
  margin: 0 0 -1px -1px;
  padding-bottom: 2px;
  background: #fff;
}

.panel {
  display: flex;
  justify-content: space-between;
  padding: 9px 10px 10px 11px;
  border: 1px solid #8b8e98;
  background: #fff;
}

.inputs-box {
  width: 457px;
  height: 220px;
  border: 1px solid #828790;
}

.inputs {
  width: 100%;
  table-layout: fixed;
  border-collapse: collapse;
}

.inputs .name {
  width: 226px;
}

.inputs th {
  height: 25px;
  padding: 2px 6px 0;
  font-weight: normal;
  text-align: left;
  border-bottom: 1px solid #d5d5d5;
  border-right: 1px solid #e4e5e7;
  background: linear-gradient(#fff 40%, #f1f2f4);
}

.inputs td {
  height: 20px;
  padding: 0 3px;
  border-bottom: 1px solid #c8c8c8;
}

.inputs td:first-child {
  padding-left: 2px;
  border-right: 1px solid #c8c8c8;
}

.inputs tbody tr:nth-child(even) {
  background: #eaeaea;
}

.inputs svg {
  width: 16px;
  height: 16px;
  margin-right: 4px;
  vertical-align: middle;
}

.side-buttons {
  display: flex;
  flex-direction: column;
  justify-content: flex-end;
  gap: 12px;
  padding-bottom: 1px;
}

.push {
  width: 73px;
  height: 21px;
  border: 1px solid #707070;
  border-radius: 3px;
  background: linear-gradient(#f3f3f3 50%, #dedede 50%, #cfcfcf);
  box-shadow: inset 0 0 0 1px #fbfbfb;
}

.side-buttons .push {
  width: 103px;
}

.dialog-footer {
  display: flex;
  justify-content: flex-end;
  gap: 8px;
  padding: 6px 3px 0 0;
}

.resize-grip {
  position: absolute;
  right: 3px;
  bottom: 3px;
  width: 8px;
  height: 8px;
}
```
